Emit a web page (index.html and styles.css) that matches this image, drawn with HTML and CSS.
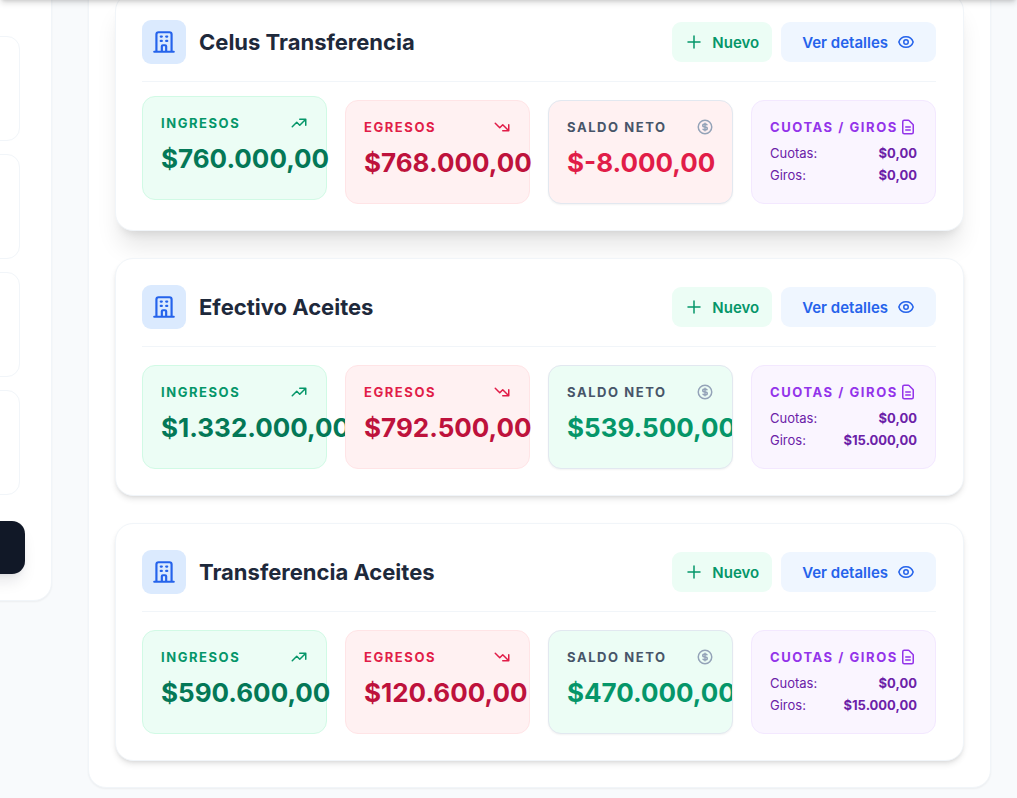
FILE: index.html
```html
<!DOCTYPE html>
<html lang="es">
<head>
  <meta charset="UTF-8">
  <meta name="viewport" content="width=device-width, initial-scale=1.0">
  <title>Cuentas</title>
  <link rel="stylesheet" href="styles.css">
</head>
<body>
  <!-- Icon set -->
  <svg class="sprite" aria-hidden="true">
    <symbol id="i-building" viewBox="0 0 24 24"><path d="M19 21V5a2 2 0 0 0-2-2H7a2 2 0 0 0-2 2v16m14 0h2m-2 0h-5m-9 0H3m2 0h5M9 7h1m-1 4h1m4-4h1m-1 4h1m-5 10v-5a1 1 0 0 1 1-1h2a1 1 0 0 1 1 1v5m-4 0h4"/></symbol>
    <symbol id="i-plus" viewBox="0 0 24 24"><path d="M12 4v16m8-8H4"/></symbol>
    <symbol id="i-eye" viewBox="0 0 24 24"><path d="M15 12a3 3 0 1 1-6 0 3 3 0 0 1 6 0z"/><path d="M2.458 12C3.732 7.943 7.523 5 12 5c4.478 0 8.268 2.943 9.542 7-1.274 4.057-5.064 7-9.542 7-4.477 0-8.268-2.943-9.542-7z"/></symbol>
    <symbol id="i-up" viewBox="0 0 24 24"><path d="M13 7h8m0 0v8m0-8l-8 8-4-4-6 6"/></symbol>
    <symbol id="i-down" viewBox="0 0 24 24"><path d="M13 17h8m0 0V9m0 8l-8-8-4 4-6-6"/></symbol>
    <symbol id="i-dollar" viewBox="0 0 24 24"><path d="M12 8c-1.657 0-3 .895-3 2s1.343 2 3 2 3 .895 3 2-1.343 2-3 2m0-8c1.11 0 2.08.402 2.599 1M12 8V7m0 1v8m0 0v1m0-1c-1.11 0-2.08-.402-2.599-1M21 12a9 9 0 1 1-18 0 9 9 0 0 1 18 0z"/></symbol>
    <symbol id="i-doc" viewBox="0 0 24 24"><path d="M9 12h6m-6 4h6m2 5H7a2 2 0 0 1-2-2V5a2 2 0 0 1 2-2h5.586a1 1 0 0 1 .707.293l5.414 5.414a1 1 0 0 1 .293.707V19a2 2 0 0 1-2 2z"/></symbol>
  </svg>

  <header class="topbar"></header>

  <div class="layout">
    <aside class="panel sidebar">
      <ul class="sidebar-list">
        <li></li>
        <li></li>
        <li></li>
        <li></li>
      </ul>
      <button type="button" class="sidebar-button"></button>
    </aside>

    <main class="panel accounts">
      <section class="account raised">
        <div class="account-header">
          <span class="account-icon"><svg><use href="#i-building"/></svg></span>
          <h2>Celus Transferencia</h2>
          <button type="button" class="btn btn-new"><svg><use href="#i-plus"/></svg>Nuevo</button>
          <button type="button" class="btn btn-details">Ver detalles<svg><use href="#i-eye"/></svg></button>
        </div>
        <div class="tiles">
          <div class="tile income lifted">
            <div class="tile-label">Ingresos<svg><use href="#i-up"/></svg></div>
            <p class="amount">$760.000,00</p>
          </div>
          <div class="tile expense">
            <div class="tile-label">Egresos<svg><use href="#i-down"/></svg></div>
            <p class="amount">$768.000,00</p>
          </div>
          <div class="tile balance negative">
            <div class="tile-label">Saldo neto<svg><use href="#i-dollar"/></svg></div>
            <p class="amount">$-8.000,00</p>
          </div>
          <div class="tile fees">
            <div class="tile-label">Cuotas / Giros<svg><use href="#i-doc"/></svg></div>
            <dl>
              <dt>Cuotas:</dt><dd>$0,00</dd>
              <dt>Giros:</dt><dd>$0,00</dd>
            </dl>
          </div>
        </div>
      </section>

      <section class="account">
        <div class="account-header">
          <span class="account-icon"><svg><use href="#i-building"/></svg></span>
          <h2>Efectivo Aceites</h2>
          <button type="button" class="btn btn-new"><svg><use href="#i-plus"/></svg>Nuevo</button>
          <button type="button" class="btn btn-details">Ver detalles<svg><use href="#i-eye"/></svg></button>
        </div>
        <div class="tiles">
          <div class="tile income">
            <div class="tile-label">Ingresos<svg><use href="#i-up"/></svg></div>
            <p class="amount">$1.332.000,00</p>
          </div>
          <div class="tile expense">
            <div class="tile-label">Egresos<svg><use href="#i-down"/></svg></div>
            <p class="amount">$792.500,00</p>
          </div>
          <div class="tile balance">
            <div class="tile-label">Saldo neto<svg><use href="#i-dollar"/></svg></div>
            <p class="amount">$539.500,00</p>
          </div>
          <div class="tile fees">
            <div class="tile-label">Cuotas / Giros<svg><use href="#i-doc"/></svg></div>
            <dl>
              <dt>Cuotas:</dt><dd>$0,00</dd>
              <dt>Giros:</dt><dd>$15.000,00</dd>
            </dl>
          </div>
        </div>
      </section>

      <section class="account">
        <div class="account-header">
          <span class="account-icon"><svg><use href="#i-building"/></svg></span>
          <h2>Transferencia Aceites</h2>
          <button type="button" class="btn btn-new"><svg><use href="#i-plus"/></svg>Nuevo</button>
          <button type="button" class="btn btn-details">Ver detalles<svg><use href="#i-eye"/></svg></button>
        </div>
        <div class="tiles">
          <div class="tile income">
            <div class="tile-label">Ingresos<svg><use href="#i-up"/></svg></div>
            <p class="amount">$590.600,00</p>
          </div>
          <div class="tile expense">
            <div class="tile-label">Egresos<svg><use href="#i-down"/></svg></div>
            <p class="amount">$120.600,00</p>
          </div>
          <div class="tile balance">
            <div class="tile-label">Saldo neto<svg><use href="#i-dollar"/></svg></div>
            <p class="amount">$470.000,00</p>
          </div>
          <div class="tile fees">
            <div class="tile-label">Cuotas / Giros<svg><use href="#i-doc"/></svg></div>
            <dl>
              <dt>Cuotas:</dt><dd>$0,00</dd>
              <dt>Giros:</dt><dd>$15.000,00</dd>
            </dl>
          </div>
        </div>
      </section>
    </main>
  </div>
</body>
</html>
```
FILE: styles.css
```css
* {
  box-sizing: border-box;
}

body {
  margin: 0;
  min-height: 100vh;
  background: #f8fafc;
  font-family: Inter, "Liberation Sans", sans-serif;
  color: #1e293b;
  overflow: hidden;
}

h2, p, ul, dl, dd {
  margin: 0;
  padding: 0;
}

svg {
  width: 18px;
  height: 18px;
  flex: none;
  fill: none;
  stroke: currentColor;
  stroke-width: 2;
  stroke-linecap: round;
  stroke-linejoin: round;
}

.sprite {
  display: none;
}

/* scrolled page: only the shadow of the bar shows */
.topbar {
  position: fixed;
  bottom: 100%;
  left: 0;
  right: 0;
  height: 64px;
  background: #fff;
  box-shadow: 0 4px 6px -1px rgba(0, 0, 0, 0.14), 0 2px 4px -2px rgba(0, 0, 0, 0.14);
  z-index: 10;
}

.layout {
  display: grid;
  grid-template-columns: 340px 1fr;
  gap: 36px;
  align-items: start;
  margin: -34px 26px 0 -288px;
}

.panel {
  background: #fff;
  border: 1px solid #f1f5f9;
  border-radius: 18px;
  box-shadow: 0 1px 2px rgba(0, 0, 0, 0.05);
  padding: 26px;
}

/* Sidebar */
.sidebar {
  padding-top: 69px;
}

.sidebar-list {
  list-style: none;
  display: grid;
  gap: 13px;
  padding-right: 5px;
  margin-bottom: 26px;
}

.sidebar-list li {
  height: 105px;
  border: 1px solid #f1f5f9;
  border-radius: 13px;
}

.sidebar-button {
  display: block;
  width: 100%;
  height: 53px;
  border: none;
  border-radius: 13px;
  background: #111827;
  box-shadow: 0 10px 15px -3px rgba(15, 23, 42, 0.1), 0 4px 6px -4px rgba(15, 23, 42, 0.1);
}

/* Accounts */
.accounts {
  display: grid;
  gap: 27px;
}

.account {
  min-width: 0;
  padding: 26px 27px 26px 26px;
  background: #fff;
  border: 1px solid #f1f5f9;
  border-radius: 18px;
  box-shadow: 0 4px 6px -1px rgba(0, 0, 0, 0.1), 0 2px 4px -2px rgba(0, 0, 0, 0.1);
}

.account.raised {
  box-shadow: 0 20px 25px -5px rgba(0, 0, 0, 0.1), 0 8px 10px -6px rgba(0, 0, 0, 0.1);
}

.account-header {
  display: flex;
  align-items: center;
  gap: 9px;
  padding-bottom: 17px;
  margin-bottom: 18px;
  border-bottom: 1px solid #f1f5f9;
}

.account-icon {
  display: flex;
  align-items: center;
  justify-content: center;
  width: 44px;
  height: 44px;
  border-radius: 9px;
  background: #dbeafe;
  color: #2563eb;
}

.account-icon svg {
  width: 26px;
  height: 26px;
}

.account h2 {
  flex: 1;
  margin-left: 4px;
  font-size: 22px;
  line-height: 30px;
  font-weight: 700;
}

.btn {
  display: flex;
  align-items: center;
  gap: 9px;
  height: 40px;
  padding: 0 13px;
  border: none;
  border-radius: 9px;
  font-family: inherit;
  font-size: 15px;
  font-weight: 600;
  cursor: pointer;
}

.btn-new {
  background: #ecfdf5;
  color: #059669;
}

.btn-details {
  padding: 0 21px;
  background: #eff6ff;
  color: #2563eb;
}

.tiles {
  display: grid;
  grid-template-columns: repeat(4, minmax(0, 1fr));
  gap: 18px;
}

.tile {
  position: relative;
  height: 104px;
  padding: 17px 18px;
  border: 1px solid;
  border-radius: 13px;
}

.tile.lifted {
  transform: translateY(-4px);
}

.tile-label {
  display: flex;
  align-items: center;
  justify-content: space-between;
  margin-bottom: 8px;
  font-size: 13px;
  line-height: 18px;
  font-weight: 700;
  letter-spacing: 0.12em;
  text-transform: uppercase;
  white-space: nowrap;
}

.amount {
  font-size: 26px;
  line-height: 38px;
  font-weight: 700;
}

.income {
  background: #ecfdf5;
  border-color: #d1fae5;
  color: #047857;
}

.income .tile-label {
  color: #059669;
}

.expense {
  background: #fff1f2;
  border-color: #ffe4e6;
  color: #be123c;
}

.expense .tile-label {
  color: #e11d48;
}

.balance {
  overflow: hidden;
  background: #ecfdf5;
  border-color: #e2e8f0;
  color: #059669;
  box-shadow: 0 1px 2px rgba(0, 0, 0, 0.05);
}

.balance.negative {
  background: #fff1f2;
  color: #e11d48;
}

.balance .tile-label {
  color: #475569;
}

.balance svg {
  color: #94a3b8;
}

.fees {
  background: #faf5ff;
  border-color: #f3e8ff;
  color: #6b21a8;
}

.fees .tile-label {
  color: #9333ea;
}

.fees dl {
  display: grid;
  grid-template-columns: auto auto;
  gap: 4px;
  font-size: 13px;
  line-height: 18px;
}

.fees dd {
  font-weight: 700;
  text-align: right;
}
```
